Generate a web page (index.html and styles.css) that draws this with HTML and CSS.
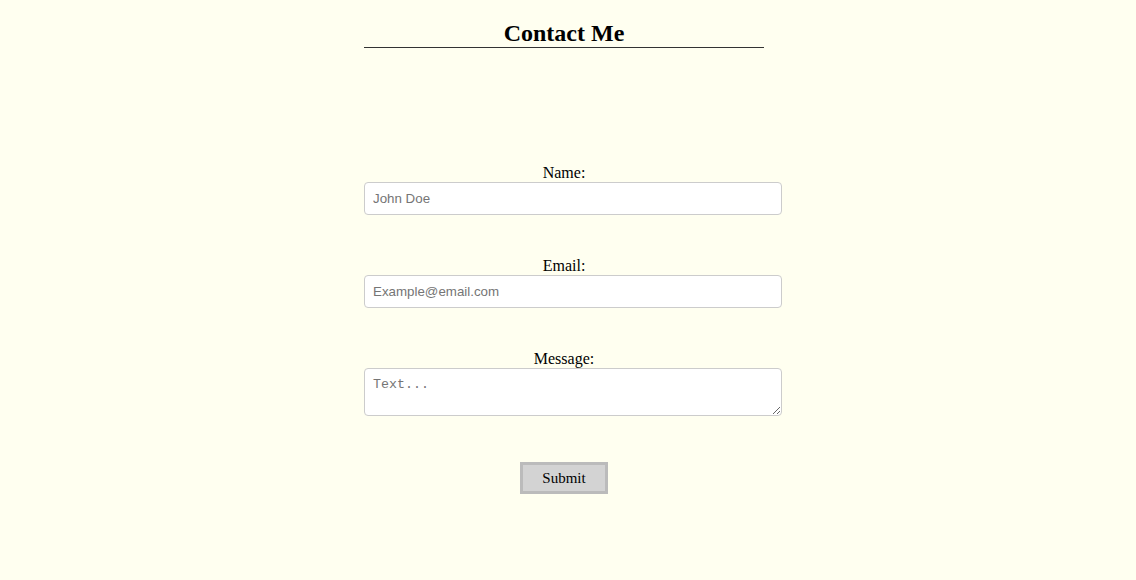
FILE: index.html
```html
<!DOCTYPE html>
<html lang="en">
<head>
<meta charset="utf-8">
<title>Contact Me</title>
<link rel="stylesheet" href="styles.css">
</head>
<body>
<main class="contact">
  <h2 class="contact-title">Contact Me</h2>
  <form class="contact-form">
    <div class="field">
      <label class="field-label" for="name">Name:</label>
      <input class="field-input" id="name" type="text" placeholder="John Doe">
    </div>
    <div class="field">
      <label class="field-label" for="email">Email:</label>
      <input class="field-input" id="email" type="email" placeholder="Example@email.com">
    </div>
    <div class="field">
      <label class="field-label" for="message">Message:</label>
      <textarea class="field-input field-text" id="message" rows="2" placeholder="Text..."></textarea>
    </div>
    <div class="actions">
      <button class="submit" type="submit">Submit</button>
    </div>
  </form>
</main>
</body>
</html>
```

FILE: styles.css
```css
html, body {
  background: #fffff0;
}
body {
  margin: 0 16px 8px 8px;
  font-family: "Liberation Serif", "Times New Roman", serif;
  font-size: 16px;
  color: #000;
}
.contact {
  width: 400px;
  margin: 0 auto;
}
.contact-title {
  font-size: 24px;
  font-weight: bold;
  text-align: center;
  margin: 19.92px 0 0;
  border-bottom: 1px solid #333;
}
.contact-form {
  margin-top: 116.5px;
}
.field {
  margin-bottom: 41.8px;
}
.field-label {
  display: block;
  text-align: center;
}
.field-input {
  display: block;
  width: 100%;
  padding: 8px;
  margin: 0;
  border: 1px solid #ccc;
  border-radius: 4px;
  background: #fff;
  font-family: "Liberation Sans", Arial, sans-serif;
  font-size: 13.333px;
  box-sizing: content-box;
}
.field-text {
  font-family: "Liberation Mono", "DejaVu Sans Mono", monospace;
  height: 30px;
}
.field-input::placeholder {
  color: #757575;
}
.actions {
  display: flex;
  justify-content: center;
  margin-top: 46px;
}
.submit {
  font-family: "Liberation Serif", "Times New Roman", serif;
  font-size: 15px;
  color: #000;
  background: #d3d3d3;
  border: 3px solid #bbb;
  padding: 4px 18px;
  width: 88px;
  height: 32px;
}
```
